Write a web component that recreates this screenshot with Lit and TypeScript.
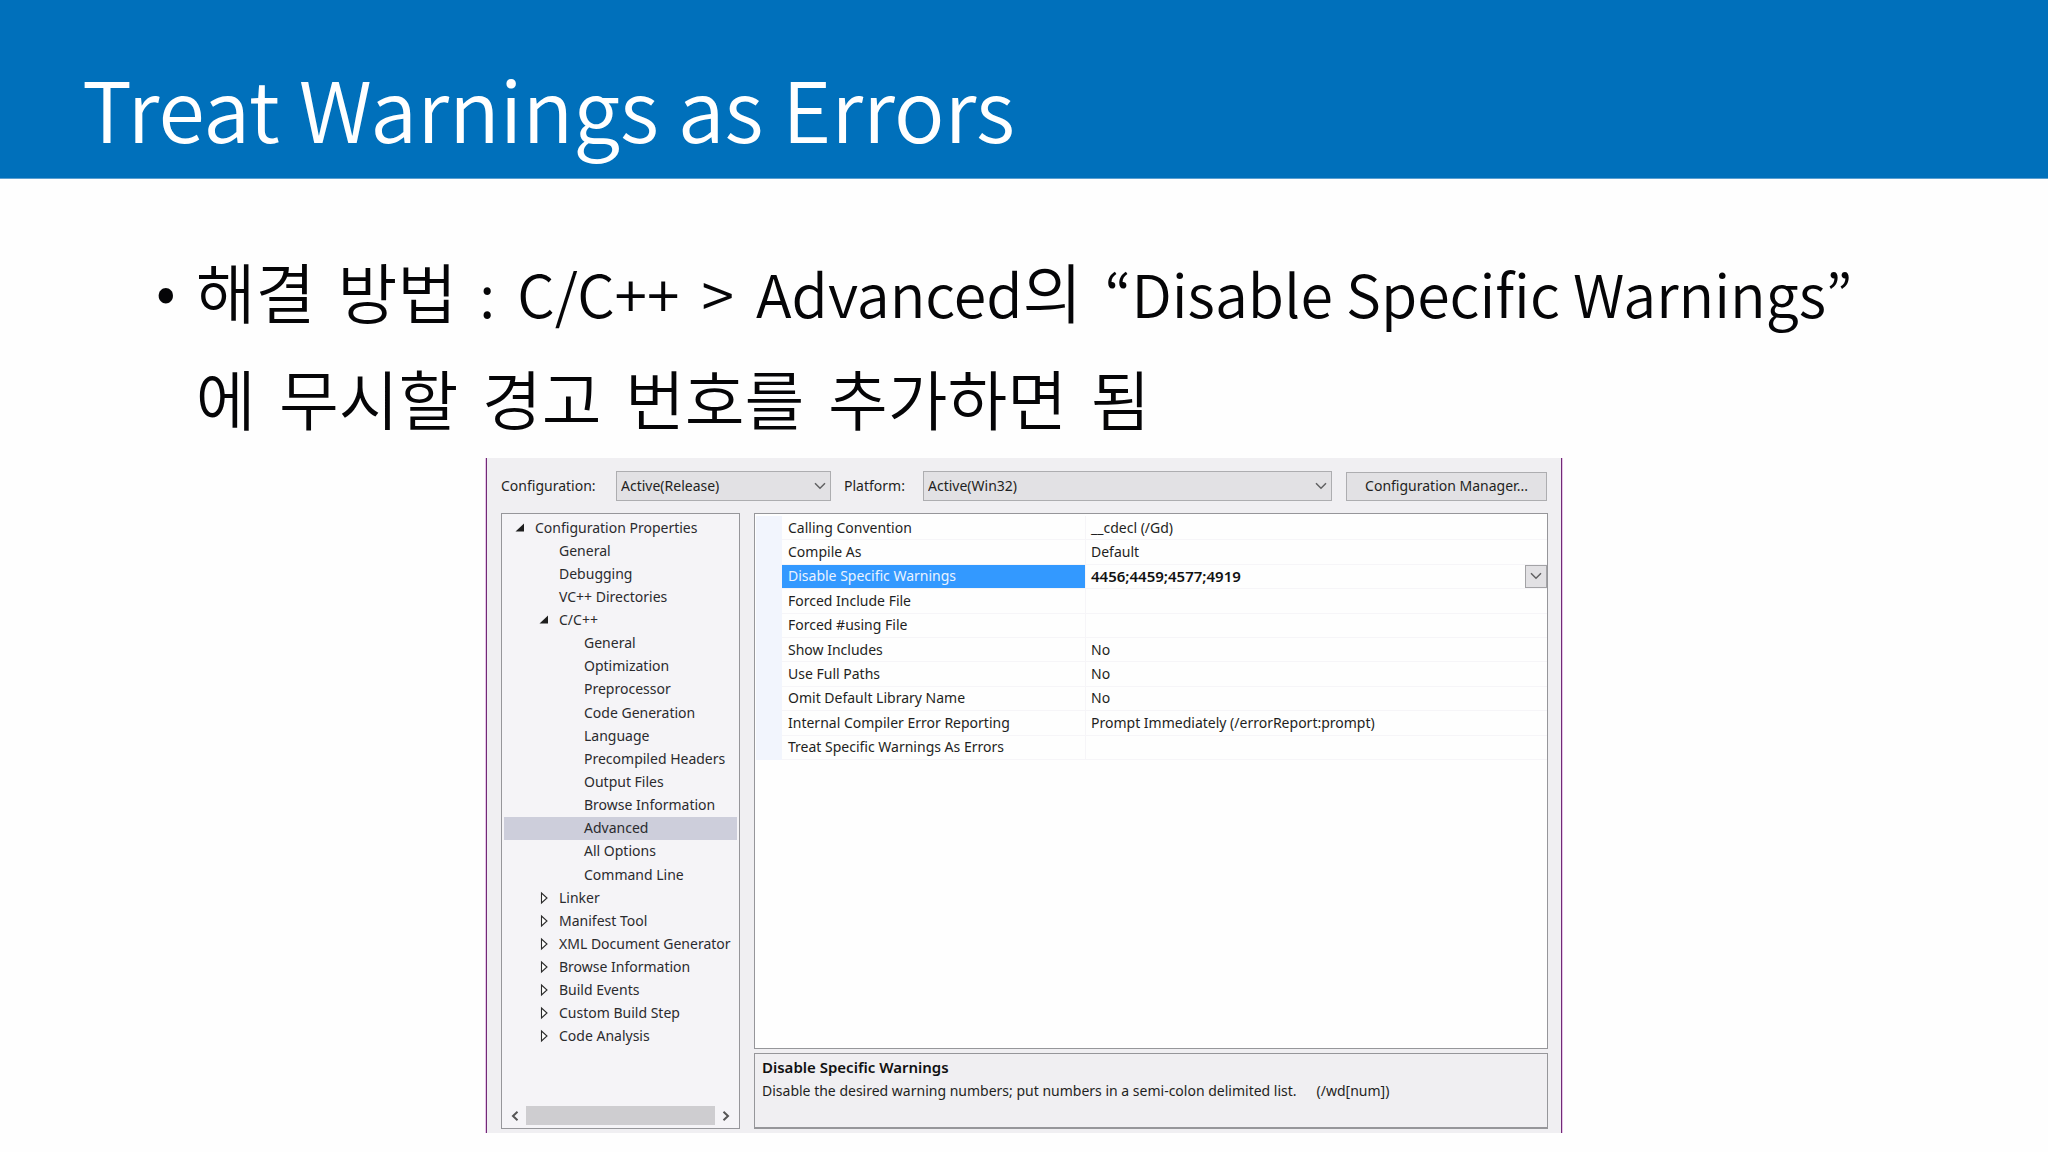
import { LitElement, html, css, svg } from "lit";
import { customElement, property } from "lit/decorators.js";
import { classMap } from "lit/directives/class-map.js";

type Marker = "open" | "closed" | "none";

interface TreeNode {
  label: string;
  depth: 0 | 1 | 2;
  marker: Marker;
  selected?: boolean;
}

interface PropertyRow {
  name: string;
  value: string;
  selected?: boolean;
}

const TREE: TreeNode[] = [
  { label: "Configuration Properties", depth: 0, marker: "open" },
  { label: "General", depth: 1, marker: "none" },
  { label: "Debugging", depth: 1, marker: "none" },
  { label: "VC++ Directories", depth: 1, marker: "none" },
  { label: "C/C++", depth: 1, marker: "open" },
  { label: "General", depth: 2, marker: "none" },
  { label: "Optimization", depth: 2, marker: "none" },
  { label: "Preprocessor", depth: 2, marker: "none" },
  { label: "Code Generation", depth: 2, marker: "none" },
  { label: "Language", depth: 2, marker: "none" },
  { label: "Precompiled Headers", depth: 2, marker: "none" },
  { label: "Output Files", depth: 2, marker: "none" },
  { label: "Browse Information", depth: 2, marker: "none" },
  { label: "Advanced", depth: 2, marker: "none", selected: true },
  { label: "All Options", depth: 2, marker: "none" },
  { label: "Command Line", depth: 2, marker: "none" },
  { label: "Linker", depth: 1, marker: "closed" },
  { label: "Manifest Tool", depth: 1, marker: "closed" },
  { label: "XML Document Generator", depth: 1, marker: "closed" },
  { label: "Browse Information", depth: 1, marker: "closed" },
  { label: "Build Events", depth: 1, marker: "closed" },
  { label: "Custom Build Step", depth: 1, marker: "closed" },
  { label: "Code Analysis", depth: 1, marker: "closed" },
];

const PROPERTIES: PropertyRow[] = [
  { name: "Calling Convention", value: "__cdecl (/Gd)" },
  { name: "Compile As", value: "Default" },
  { name: "Disable Specific Warnings", value: "4456;4459;4577;4919", selected: true },
  { name: "Forced Include File", value: "" },
  { name: "Forced #using File", value: "" },
  { name: "Show Includes", value: "No" },
  { name: "Use Full Paths", value: "No" },
  { name: "Omit Default Library Name", value: "No" },
  { name: "Internal Compiler Error Reporting", value: "Prompt Immediately (/errorReport:prompt)" },
  { name: "Treat Specific Warnings As Errors", value: "" },
];

const chevronDown = html`<svg class="chevron" viewBox="0 0 12 8" width="12" height="8" aria-hidden="true">
  <path d="M1 1.2 6 6.2 11 1.2" fill="none" stroke="#606062" stroke-width="1.5" />
</svg>`;

const markers: Record<Marker, unknown> = {
  open: svg`<path d="M9 0.5V8.5H0.5Z" fill="#1e1e1e" />`,
  closed: svg`<path d="M2.5 0V10L8 5Z" fill="#fff" stroke="#2a2a2a" stroke-width="1.1" />`,
  none: "",
};

@customElement("config-tree")
export class ConfigTree extends LitElement {
  @property({ attribute: false }) nodes: TreeNode[] = [];

  static styles = css`
    :host {
      display: flex;
      flex-direction: column;
      box-sizing: border-box;
      border: 1px solid #96969a;
      padding: 2px 2px 3px;
      background: #f5f4f7;
      color: #2b2b2e;
    }
    .list {
      display: grid;
      grid-auto-rows: 1fr;
      min-height: 532px;
      margin: 0 0 58px;
      padding: 0;
      list-style: none;
    }
    .item {
      display: flex;
      align-items: center;
      gap: 10px;
      white-space: nowrap;
      line-height: 20px;
    }
    .depth-0 {
      padding-left: 11px;
    }
    .depth-1 {
      padding-left: 35px;
    }
    .depth-2 {
      padding-left: 60px;
    }
    .selected {
      background: #cdcedb;
    }
    .marker {
      flex: none;
      overflow: visible;
    }
    .scrollbar {
      display: flex;
      height: 19px;
    }
    .arrow {
      display: grid;
      place-items: center;
      width: 22px;
      padding: 0;
      border: 0;
      background: none;
    }
    .thumb {
      flex: 1;
      background: #cecdd0;
    }
  `;

  render() {
    return html`
      <ul class="list" role="tree" aria-label="Configuration properties">
        ${this.nodes.map(
          (n) => html`<li
            role="treeitem"
            aria-level=${n.depth + 1}
            aria-selected=${n.selected ? "true" : "false"}
            class=${classMap({ item: true, [`depth-${n.depth}`]: true, selected: !!n.selected })}
          >
            <svg class="marker" viewBox="0 0 10 10" width="10" height="10" aria-hidden="true">${markers[n.marker]}</svg>
            <span>${n.label}</span>
          </li>`,
        )}
      </ul>
      <div class="scrollbar">
        <button class="arrow" aria-label="Scroll left">
          <svg viewBox="0 0 8 10" width="8" height="10"><path d="M6.5 0.8 2 5 6.5 9.2" fill="none" stroke="#555" stroke-width="2" /></svg>
        </button>
        <div class="thumb"></div>
        <button class="arrow" aria-label="Scroll right">
          <svg viewBox="0 0 8 10" width="8" height="10"><path d="M1.5 0.8 6 5 1.5 9.2" fill="none" stroke="#555" stroke-width="2" /></svg>
        </button>
      </div>
    `;
  }
}

@customElement("property-grid")
export class PropertyGrid extends LitElement {
  @property({ attribute: false }) rows: PropertyRow[] = [];

  static styles = css`
    :host {
      display: block;
      box-sizing: border-box;
      border: 1px solid #96969a;
      padding: 2px 0 0 1px;
      background: #fefefe;
      color: #1f1f22;
    }
    .table {
      width: 100%;
      height: 244px;
      border-collapse: separate;
      border-spacing: 0;
      table-layout: fixed;
      line-height: 20px;
    }
    .gutter {
      width: 26px;
      background: #f2f5fd;
    }
    .name-col {
      width: 304px;
    }
    .name,
    .value {
      box-sizing: border-box;
      padding: 0 0 0 6px;
      border-bottom: 1px solid #f6f5f8;
      text-align: left;
      font-weight: inherit;
      white-space: nowrap;
    }
    .name {
      border-right: 1px solid #f6f5f8;
    }
    .value {
      padding-left: 5px;
    }
    .selected .name {
      background: #3399ff;
      color: #eaf3ff;
    }
    .selected .value {
      font-size: 15px;
      font-weight: 600;
      color: #111;
    }
    .cell {
      display: flex;
      align-items: center;
      justify-content: space-between;
      height: 20px;
    }
    .drop {
      display: grid;
      place-items: center;
      box-sizing: border-box;
      width: 22px;
      height: 23px;
      padding: 0;
      border: 1px solid #a3a3a6;
      background: #e2e1e4;
    }
  `;

  render() {
    return html`<table class="table" aria-label="Advanced properties">
      <colgroup>
        <col class="gutter" />
        <col class="name-col" />
        <col />
      </colgroup>
      <tbody>
        ${this.rows.map(
          (r) => html`<tr class=${classMap({ selected: !!r.selected })}>
            <td class="gutter"></td>
            <th class="name" scope="row">${r.name}</th>
            <td class="value">
              ${r.selected
                ? html`<div class="cell">
                    <span>${r.value}</span>
                    <button class="drop" aria-label="Edit value">${chevronDown}</button>
                  </div>`
                : r.value}
            </td>
          </tr>`,
        )}
      </tbody>
    </table>`;
  }
}

@customElement("app-root")
export class AppRoot extends LitElement {
  static styles = css`
    :host {
      display: block;
      min-height: 100vh;
      background: #fefefe;
      color: #050507;
      font-family: "Noto Sans", "Noto Sans CJK KR", sans-serif;
    }
    .banner {
      display: flex;
      align-items: flex-end;
      box-sizing: border-box;
      min-height: 179px;
      padding: 0 82px 13px;
      background: #0070bb;
      border-bottom: 1px solid #5c9fd0;
    }
    .title {
      margin: 0;
      color: #fff;
      font-family: "Noto Sans CJK KR", sans-serif;
      font-size: 84px;
      font-weight: 350;
      line-height: 116px;
    }
    .points {
      margin: 0;
      padding: 58px 84px 0 156px;
      list-style: none;
      font-family: "Noto Sans CJK KR", sans-serif;
      font-size: 59px;
      font-weight: 350;
      line-height: 107px;
    }
    .point {
      display: flex;
      gap: 20px;
    }
    .bullet {
      line-height: 101px;
    }
    .line {
      display: block;
      height: 107px;
    }
    .ko {
      font-size: 65px;
    }
    .word {
      margin-right: 9px;
    }
    .dialog {
      box-sizing: border-box;
      max-width: 1076px;
      margin: 7px auto 0;
      padding: 13px 13px 4px 14px;
      border: solid #712a76;
      border-width: 0 1px;
      box-shadow: 1px 0 #e6c3e8, -1px 0 #e6c3e8;
      background: #f0eff2;
      color: #1f1f22;
      font-size: 14px;
      line-height: 20px;
    }
    .toolbar {
      display: flex;
      align-items: center;
      padding-right: 1px;
      margin-bottom: 12px;
    }
    .label {
      white-space: nowrap;
    }
    .label-config {
      width: 115px;
    }
    .label-platform {
      width: 79px;
      margin-left: 13px;
    }
    .combo {
      display: grid;
      align-items: center;
    }
    .combo-config {
      width: 215px;
    }
    .combo-platform {
      flex: 1;
    }
    .select,
    .chevron {
      grid-area: 1 / 1;
    }
    .select {
      appearance: none;
      width: 100%;
      height: 30px;
      padding: 0 4px;
      border: 1px solid #adadb0;
      border-radius: 0;
      background: #e2e1e4;
      color: inherit;
      font: inherit;
    }
    .chevron {
      justify-self: end;
      margin-right: 5px;
      pointer-events: none;
    }
    .manager {
      width: 201px;
      height: 29px;
      margin-left: 14px;
      padding: 0;
      border: 1px solid #adadb0;
      background: #e2e1e4;
      color: inherit;
      font: inherit;
    }
    .panes {
      display: flex;
      gap: 14px;
    }
    .tree {
      width: 239px;
      flex: none;
    }
    .detail {
      display: flex;
      flex: 1;
      flex-direction: column;
      gap: 4px;
    }
    .grid {
      flex: 1;
    }
    .help {
      box-sizing: border-box;
      min-height: 76px;
      padding: 2px 7px;
      border: 1px solid #96969a;
      border-bottom-width: 2px;
      line-height: 23px;
    }
    .help-title,
    .help-text {
      margin: 0;
    }
    .help-title {
      font-size: 15px;
      font-weight: 600;
      color: #111;
    }
    .switch {
      margin-left: 20px;
    }
  `;

  render() {
    return html`
      <header class="banner"><h1 class="title">Treat Warnings as Errors</h1></header>
      <main>
        <ul class="points">
          <li class="point">
            <span class="bullet" aria-hidden="true">•</span>
            <span>
              <span class="line">
                <span class="word ko">해결</span>
                <span class="word ko">방법</span>
                <span class="word">:</span>
                <span class="word">C/C++</span>
                <span class="word">&gt;</span>
                <span class="word">Advanced<span class="ko">의</span></span>
                <span>“Disable Specific Warnings”</span>
              </span>
              <span class="line ko">
                <span class="word">에</span>
                <span class="word">무시할</span>
                <span class="word">경고</span>
                <span class="word">번호를</span>
                <span class="word">추가하면</span>
                <span>됨</span>
              </span>
            </span>
          </li>
        </ul>
        <section class="dialog" aria-label="Project properties">
          <div class="toolbar">
            <label class="label label-config" for="configuration">Configuration:</label>
            <span class="combo combo-config">
              <select class="select" id="configuration"><option>Active(Release)</option></select>
              ${chevronDown}
            </span>
            <label class="label label-platform" for="platform">Platform:</label>
            <span class="combo combo-platform">
              <select class="select" id="platform"><option>Active(Win32)</option></select>
              ${chevronDown}
            </span>
            <button class="manager">Configuration Manager...</button>
          </div>
          <div class="panes">
            <config-tree class="tree" .nodes=${TREE}></config-tree>
            <div class="detail">
              <property-grid class="grid" .rows=${PROPERTIES}></property-grid>
              <div class="help">
                <h2 class="help-title">Disable Specific Warnings</h2>
                <p class="help-text">Disable the desired warning numbers; put numbers in a semi-colon delimited list.<span class="switch">(/wd[num])</span></p>
              </div>
            </div>
          </div>
        </section>
      </main>
    `;
  }
}
